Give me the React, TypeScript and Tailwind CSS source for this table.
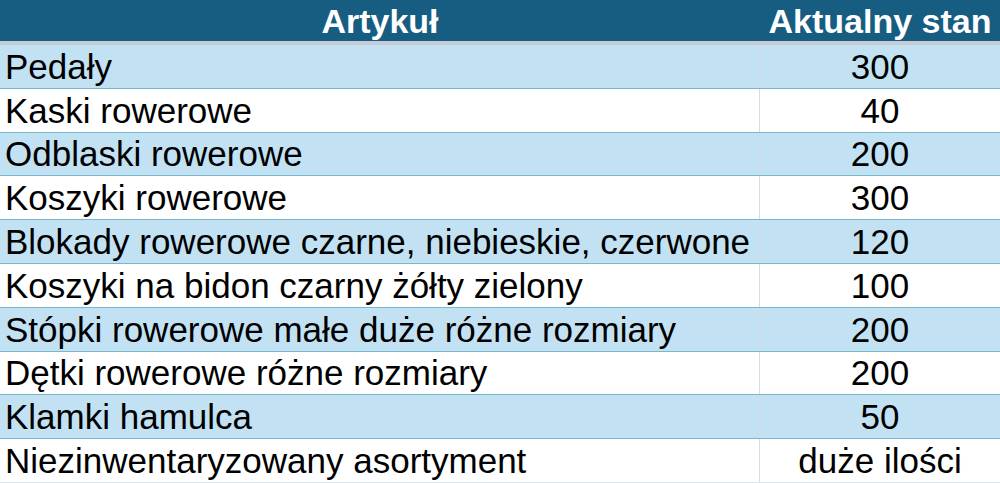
import React from "react";

const rows: [string, string][] = [
  ["Pedały", "300"],
  ["Kaski rowerowe", "40"],
  ["Odblaski rowerowe", "200"],
  ["Koszyki rowerowe", "300"],
  ["Blokady rowerowe czarne, niebieskie, czerwone", "120"],
  ["Koszyki na bidon czarny żółty zielony", "100"],
  ["Stópki rowerowe małe duże różne rozmiary", "200"],
  ["Dętki rowerowe różne rozmiary", "200"],
  ["Klamki hamulca", "50"],
  ["Niezinwentaryzowany asortyment", "duże ilości"],
];

export default function App() {
  return (
    <div className="w-[1000px] h-[483px] overflow-hidden bg-white font-['Liberation_Sans',Arial,sans-serif] text-black">
      <div className="flex h-[41px] bg-[#175d82] text-white font-bold text-[34px] leading-none">
        <div className="w-[760px] flex items-center justify-center">Artykuł</div>
        <div className="flex-1 flex items-center justify-center whitespace-nowrap">Aktualny stan</div>
      </div>
      <div className="h-[4px] bg-[#c5ccd3]" />
      {rows.map(([name, qty], i) => (
        <div
          key={name}
          className={`flex h-[43.8px] border-b text-[35px] leading-none whitespace-nowrap ${
            i % 2 === 0 ? "bg-[#c2e2f4]" : "bg-white"
          } ${i === rows.length - 1 ? "border-[#dfe4e8]" : "border-[#78b8cc]"}`}
        >
          <div className="w-[760px] border-r border-[#d6dde2] flex items-center pl-[5px]">{name}</div>
          <div className="flex-1 flex items-center justify-center">{qty}</div>
        </div>
      ))}
    </div>
  );
}
